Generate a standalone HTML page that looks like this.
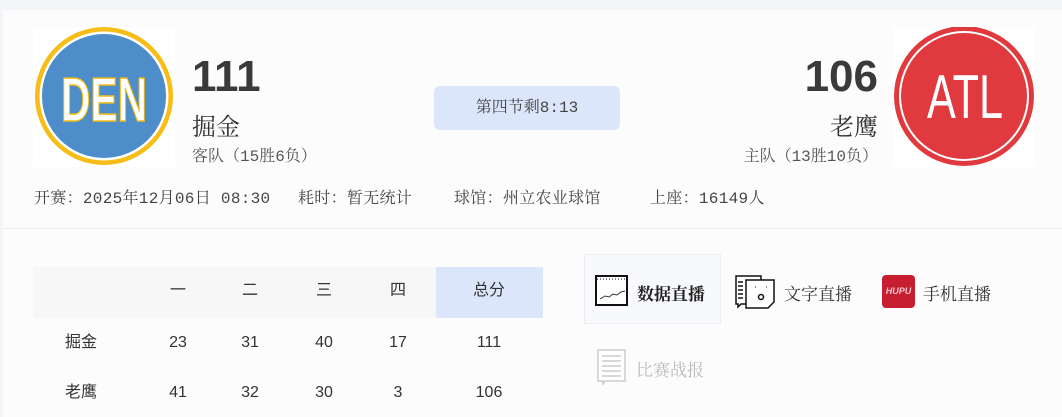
<!DOCTYPE html>
<html><head><meta charset="utf-8"><style>
*{margin:0;padding:0;box-sizing:border-box}
body{width:1062px;height:417px;background:#f4f5f8;position:relative;overflow:hidden;font-family:"Liberation Mono","Noto Serif CJK SC",serif;color:#333}
.panel{position:absolute;left:3px;top:10px;width:1059px;height:407px;background:#fcfcfd}
.abs{position:absolute;white-space:nowrap}
.score{font-family:"Liberation Sans",sans-serif;font-weight:bold;font-size:44px;color:#3a3a3a;line-height:1}
.name{font-size:24px;color:#333;line-height:1;font-family:"Noto Serif CJK SC",serif}
.rec{font-size:16px;color:#555;line-height:1}
.info{font-size:16px;color:#444;line-height:1;top:191px;letter-spacing:0.3px}
.sep{position:absolute;left:3px;top:228px;width:1059px;height:1px;background:#ececef}
.c{position:absolute;width:80px;margin-left:-40px;text-align:center;font-family:"Liberation Sans","Noto Sans CJK SC",sans-serif;font-size:16px;color:#333;line-height:20px}
</style></head><body>
<div class="panel"></div>
<svg class="abs" style="left:33px;top:27px" width="142" height="140">
<rect width="142" height="140" fill="#fff"/>
<circle cx="71" cy="69" r="69" fill="#f6bd17"/>
<circle cx="71" cy="69" r="64.5" fill="#fff"/>
<circle cx="71" cy="69" r="62" fill="#4d8dc9"/>
<text x="71" y="94" text-anchor="middle" font-family="Liberation Sans Narrow,Liberation Sans,sans-serif" font-size="62" font-weight="bold" fill="#fff" stroke="#f6bd17" stroke-width="1.5" textLength="86" lengthAdjust="spacingAndGlyphs">DEN</text>
</svg>
<svg class="abs" style="left:893px;top:27px" width="142" height="140">
<rect width="142" height="140" fill="#fff"/>
<circle cx="71" cy="69" r="70" fill="#e0393e"/>
<circle cx="71" cy="69" r="65" fill="#fff"/>
<circle cx="71" cy="69" r="63" fill="#e0393e"/>
<text x="72" y="91" text-anchor="middle" font-family="Liberation Sans Narrow,Liberation Sans,sans-serif" font-size="62" fill="#fff" textLength="76" lengthAdjust="spacingAndGlyphs">ATL</text>
</svg>
<div class="abs score" style="left:192px;top:55px">111</div>
<div class="abs name" style="left:192px;top:113px">掘金</div>
<div class="abs rec" style="left:192px;top:149px">客队（15胜6负）</div>
<div class="abs score" style="right:184px;top:55px">106</div>
<div class="abs name" style="right:184px;top:113px">老鹰</div>
<div class="abs rec" style="right:184px;top:149px">主队（13胜10负）</div>
<div class="abs" style="left:434px;top:86px;width:186px;height:44px;background:#dce6fb;border-radius:6px;font-size:16px;line-height:44px;text-align:center;color:#444">第四节剩8:13</div>
<div class="abs info" style="left:34px">开赛：2025年12月06日 08:30</div>
<div class="abs info" style="left:298px">耗时：暂无统计</div>
<div class="abs info" style="left:454px">球馆：州立农业球馆</div>
<div class="abs info" style="left:650px">上座：16149人</div>
<div class="sep"></div>
<div class="abs" style="left:33px;top:267px;width:403px;height:51px;background:#f7f7f7"></div>
<div class="abs" style="left:436px;top:267px;width:107px;height:51px;background:#dce6fb"></div>
<div class="c" style="left:178px;top:281px">一</div>
<div class="c" style="left:250px;top:281px">二</div>
<div class="c" style="left:324px;top:281px">三</div>
<div class="c" style="left:398px;top:281px">四</div>
<div class="c" style="left:489px;top:281px">总分</div>
<div class="c" style="left:81px;top:333px">掘金</div>
<div class="c" style="left:178px;top:333px">23</div>
<div class="c" style="left:250px;top:333px">31</div>
<div class="c" style="left:324px;top:333px">40</div>
<div class="c" style="left:398px;top:333px">17</div>
<div class="c" style="left:489px;top:333px">111</div>
<div class="c" style="left:81px;top:383px">老鹰</div>
<div class="c" style="left:178px;top:383px">41</div>
<div class="c" style="left:250px;top:383px">32</div>
<div class="c" style="left:324px;top:383px">30</div>
<div class="c" style="left:398px;top:383px">3</div>
<div class="c" style="left:489px;top:383px">106</div>
<div class="abs" style="left:584px;top:254px;width:137px;height:70px;background:#f7f9fc;border:1px solid #eceef2"></div>
<svg class="abs" style="left:595px;top:275px" width="34" height="32">
<rect x="1" y="1" width="31" height="29" fill="#fff" stroke="#111" stroke-width="2"/>
<path d="M2 4h30" stroke="#111" stroke-dasharray="1 2"/>
<polyline points="5,24 10,21 14,22 18,19 22,20 26,17 30,16" fill="none" stroke="#333" stroke-width="1"/>
</svg>
<div class="abs" style="left:637px;top:280px;font-size:17px;font-weight:bold;color:#222;font-family:'Noto Serif CJK SC',serif">数据直播</div>
<svg class="abs" style="left:735px;top:274px" width="42" height="36">
<path d="M1 2h25v28h-20l-3 3v-3h-2z" fill="#fff" stroke="#111" stroke-width="1.5"/>
<path d="M3 8h5M3 12h5M3 16h5M3 20h5M3 24h5" stroke="#111" stroke-width="1.5"/>
<path d="M11 6h28v22l-6 6h-22z" fill="#fff" stroke="#111" stroke-width="1.5"/>
<circle cx="26" cy="23" r="2.5" fill="none" stroke="#111" stroke-width="1.5"/>
<path d="M20 13h1M31 13h1" stroke="#111"/>
</svg>
<div class="abs" style="left:784px;top:280px;font-size:17px;color:#333;font-family:'Noto Serif CJK SC',serif">文字直播</div>
<div class="abs" style="left:882px;top:275px;width:33px;height:33px;background:#c81e31;border-radius:4px;font-family:'Liberation Sans',sans-serif;font-style:italic;font-weight:bold;font-size:9px;color:#f3c5cb;text-align:center;line-height:33px">HUPU</div>
<div class="abs" style="left:923px;top:280px;font-size:17px;color:#333;font-family:'Noto Serif CJK SC',serif">手机直播</div>
<svg class="abs" style="left:597px;top:349px" width="30" height="36">
<path d="M1 1h27v31h-20l-2 3v-3h-5z" fill="#fff" stroke="#ccc" stroke-width="1.5"/>
<path d="M5 7h19M5 12h19M5 17h19M5 22h19M5 27h19" stroke="#ccc" stroke-width="1.5"/>
</svg>
<div class="abs" style="left:636px;top:356px;font-size:17px;color:#bbb;font-family:'Noto Serif CJK SC',serif">比赛战报</div>
</body></html>
